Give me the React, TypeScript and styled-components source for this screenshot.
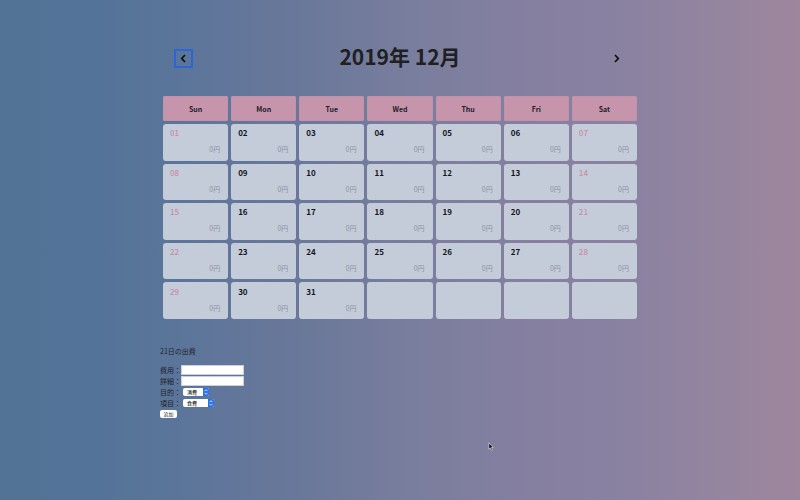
import React from "react";
import styled, { createGlobalStyle, css } from "styled-components";

const GlobalStyle = createGlobalStyle`
  * {
    box-sizing: border-box;
  }

  body {
    margin: 0;
    min-height: 100vh;
    color: #1d2129;
    font-family: "Noto Sans CJK JP", "Noto Sans", sans-serif;
    font-size: 7px;
    background: linear-gradient(90deg, #527296 0%, #547398 12%, #5b759a 22%, #6a789a 38%, #7a7e9e 52%, #857fa0 66%, #8b82a1 80%, #95859f 90%, #9e869d 100%);
  }
`;

const Page = styled.main`
  width: 60%;
  margin: 0 auto;
  padding-top: 40px;
`;

const MonthBar = styled.header`
  display: flex;
  align-items: center;
  justify-content: space-between;
  height: 36px;
  padding: 0 14px;
`;

const MonthTitle = styled.h1`
  margin: 0;
  padding-bottom: 4px;
  color: #1f2022;
  font-size: 21px;
  line-height: 32px;
  font-weight: 700;
`;

const ArrowButton = styled.button<{ $focused?: boolean }>`
  display: flex;
  align-items: center;
  justify-content: center;
  width: 19px;
  height: 19px;
  padding: 0;
  border: 2px solid ${(p) => (p.$focused ? "#2b66d4" : "transparent")};
  background: transparent;
  color: #08090c;
`;

const Calendar = styled.table`
  width: 100%;
  height: 229px;
  margin-top: 17px;
  table-layout: fixed;
  border-collapse: separate;
  border-spacing: 3px;
`;

const Weekday = styled.th`
  height: 25px;
  padding: 1px 0 0;
  border-radius: 2px;
  background: #c795ab;
  box-shadow: inset 0 0 0 1px #c093aa;
  color: #23202a;
  font-size: 7px;
  line-height: 10px;
  font-weight: 700;
`;

const DayCell = styled.td`
  padding: 0 8px 2px 7px;
  border-radius: 3px;
  background: #c4ccd9;
  vertical-align: middle;
`;

const DayNumber = styled.div<{ $weekend: boolean }>`
  font-size: 8px;
  line-height: 12px;
  font-weight: 700;
  color: #12151c;
  ${(p) =>
    p.$weekend &&
    css`
      font-weight: 500;
      color: #c98da8;
    `}
`;

const Amount = styled.div`
  padding-top: 4px;
  color: #8c92a3;
  font-size: 7px;
  line-height: 12px;
  text-align: right;
`;

const ExpenseForm = styled.form`
  margin-top: 23px;
`;

const FormTitle = styled.p`
  margin: 0 0 7px;
  font-size: 7px;
  line-height: 12px;
`;

const Field = styled.div`
  display: flex;
  align-items: center;
  height: 11px;
`;

const FieldLabel = styled.label`
  width: 21px;
  font-size: 7px;
  line-height: 10px;
  white-space: nowrap;
`;

const TextBox = styled.input`
  width: 63px;
  height: 10px;
  padding: 0 1px;
  border: 1px solid #c9d1df;
  background: #ffffff;
  font: inherit;
`;

const SelectBox = styled.span<{ $wide?: boolean }>`
  display: flex;
  width: ${(p) => (p.$wide ? "31px" : "26px")};
  height: 8px;
  margin-left: 2px;
  overflow: hidden;
  border-radius: 2px;
  background: #ffffff;
`;

const Select = styled.select`
  flex: 1;
  min-width: 0;
  height: 8px;
  padding: 0 0 0 4px;
  border: 0;
  appearance: none;
  background: transparent;
  color: #15171c;
  font-family: inherit;
  font-size: 5px;
  line-height: 8px;
  font-weight: 500;
`;

const Stepper = styled.svg`
  width: 6px;
  height: 8px;
  background: #2470ee;
`;

const AddButton = styled.button`
  display: block;
  width: 17px;
  height: 8px;
  margin-top: 2px;
  padding: 0;
  border: 0;
  border-radius: 2px;
  background: #ffffff;
  color: #2c2f36;
  font-family: inherit;
  font-size: 5px;
  line-height: 8px;
`;

const Pointer = styled.svg`
  position: fixed;
  top: 442px;
  left: 488px;
  width: 6px;
  height: 9px;
  pointer-events: none;
`;

const WEEKDAYS = ["Sun", "Mon", "Tue", "Wed", "Thu", "Fri", "Sat"];
const DAYS_IN_MONTH = 31;
const WEEKS = [0, 1, 2, 3, 4];

function Chevron({ direction }: { direction: "left" | "right" }) {
  return (
    <svg width="9" height="9" viewBox="0 0 9 9" aria-hidden="true">
      <path
        d={direction === "left" ? "M6 1 2.7 4.5 6 8" : "M3 1l3.3 3.5L3 8"}
        fill="none"
        stroke="currentColor"
        strokeWidth="1.6"
      />
    </svg>
  );
}

function Choice({ id, options, wide }: { id: string; options: string[]; wide?: boolean }) {
  return (
    <SelectBox $wide={wide}>
      <Select id={id} defaultValue={options[0]}>
        {options.map((option) => (
          <option key={option}>{option}</option>
        ))}
      </Select>
      <Stepper viewBox="0 0 6 8" aria-hidden="true">
        <path d="M1.5 3.2 3 1.7l1.5 1.5M1.5 4.8 3 6.3l1.5-1.5" fill="none" stroke="#fff" strokeWidth="0.8" />
      </Stepper>
    </SelectBox>
  );
}

export default function App() {
  return (
    <>
      <GlobalStyle />
      <Page>
        <MonthBar>
          <ArrowButton $focused type="button" aria-label="前の月">
            <Chevron direction="left" />
          </ArrowButton>
          <MonthTitle>2019年 12月</MonthTitle>
          <ArrowButton type="button" aria-label="次の月">
            <Chevron direction="right" />
          </ArrowButton>
        </MonthBar>

        <Calendar>
          <thead>
            <tr>
              {WEEKDAYS.map((name) => (
                <Weekday key={name} scope="col">
                  {name}
                </Weekday>
              ))}
            </tr>
          </thead>
          <tbody>
            {WEEKS.map((week) => (
              <tr key={week}>
                {WEEKDAYS.map((name, index) => {
                  const day = week * 7 + index + 1;
                  return (
                    <DayCell key={name}>
                      {day <= DAYS_IN_MONTH && (
                        <>
                          <DayNumber $weekend={index === 0 || index === 6}>
                            {String(day).padStart(2, "0")}
                          </DayNumber>
                          <Amount>0円</Amount>
                        </>
                      )}
                    </DayCell>
                  );
                })}
              </tr>
            ))}
          </tbody>
        </Calendar>

        <ExpenseForm onSubmit={(event) => event.preventDefault()}>
          <FormTitle>21日の出費</FormTitle>
          <Field>
            <FieldLabel htmlFor="cost">費用：</FieldLabel>
            <TextBox id="cost" type="text" />
          </Field>
          <Field>
            <FieldLabel htmlFor="detail">詳細：</FieldLabel>
            <TextBox id="detail" type="text" />
          </Field>
          <Field>
            <FieldLabel htmlFor="purpose">目的：</FieldLabel>
            <Choice id="purpose" options={["消費"]} />
          </Field>
          <Field>
            <FieldLabel htmlFor="category">項目：</FieldLabel>
            <Choice id="category" options={["食費"]} wide />
          </Field>
          <AddButton type="submit">追加</AddButton>
        </ExpenseForm>
      </Page>
      <Pointer viewBox="0 0 6 9" aria-hidden="true">
        <path
          d="M.8.8v6.4l1.4-1.3 1 2.4 1.2-.5-1-2.3h1.9z"
          fill="#0b0c10"
          stroke="#d9dce6"
          strokeWidth="0.7"
        />
      </Pointer>
    </>
  );
}
